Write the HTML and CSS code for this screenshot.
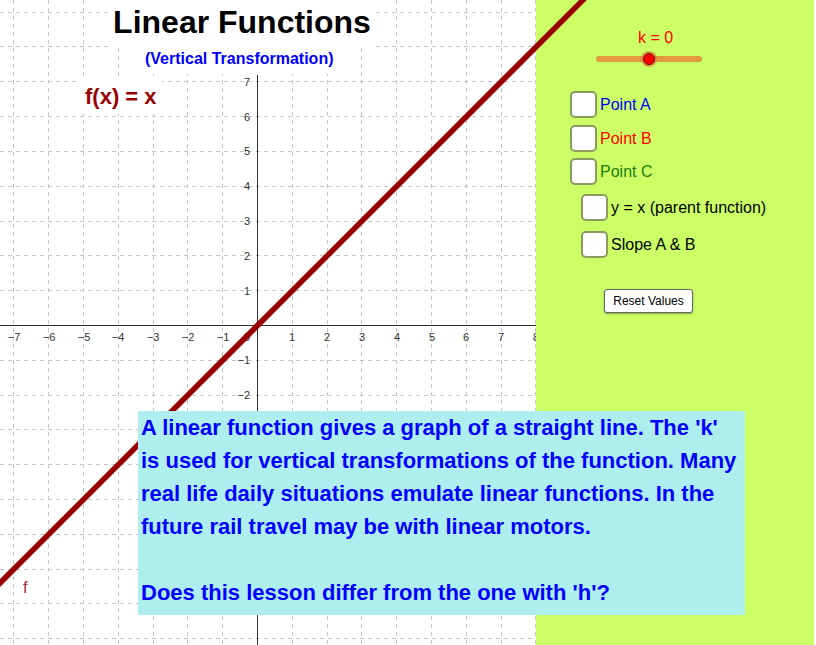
FILE: index.html
```html
<!DOCTYPE html>
<html lang="en">
<head>
  <meta charset="UTF-8" />
  <title>Linear Functions</title>
  <link rel="stylesheet" href="styles.css">
</head>
<body>
  <div class="applet">
    <!-- graphics view: grid, axes, panel background and f -->
    <svg class="graph" width="816" height="645" viewBox="0 0 816 645">
      <g class="grid">
        <line x1="13.5" y1="0" x2="13.5" y2="645"/>
        <line x1="48.5" y1="0" x2="48.5" y2="645"/>
        <line x1="83.5" y1="0" x2="83.5" y2="645"/>
        <line x1="118.5" y1="0" x2="118.5" y2="645"/>
        <line x1="153.5" y1="0" x2="153.5" y2="645"/>
        <line x1="187.5" y1="0" x2="187.5" y2="645"/>
        <line x1="222.5" y1="0" x2="222.5" y2="645"/>
        <line x1="292.5" y1="0" x2="292.5" y2="645"/>
        <line x1="327.5" y1="0" x2="327.5" y2="645"/>
        <line x1="361.5" y1="0" x2="361.5" y2="645"/>
        <line x1="396.5" y1="0" x2="396.5" y2="645"/>
        <line x1="431.5" y1="0" x2="431.5" y2="645"/>
        <line x1="466.5" y1="0" x2="466.5" y2="645"/>
        <line x1="501.5" y1="0" x2="501.5" y2="645"/>
        <line x1="535.5" y1="0" x2="535.5" y2="645"/>

        <line x1="0" y1="12.5" x2="536" y2="12.5"/>
        <line x1="0" y1="46.5" x2="536" y2="46.5"/>
        <line x1="0" y1="81.5" x2="536" y2="81.5"/>
        <line x1="0" y1="116.5" x2="536" y2="116.5"/>
        <line x1="0" y1="151.5" x2="536" y2="151.5"/>
        <line x1="0" y1="186.5" x2="536" y2="186.5"/>
        <line x1="0" y1="221.5" x2="536" y2="221.5"/>
        <line x1="0" y1="255.5" x2="536" y2="255.5"/>
        <line x1="0" y1="290.5" x2="536" y2="290.5"/>
        <line x1="0" y1="360.5" x2="536" y2="360.5"/>
        <line x1="0" y1="395.5" x2="536" y2="395.5"/>
        <line x1="0" y1="429.5" x2="536" y2="429.5"/>
        <line x1="0" y1="464.5" x2="536" y2="464.5"/>
        <line x1="0" y1="499.5" x2="536" y2="499.5"/>
        <line x1="0" y1="534.5" x2="536" y2="534.5"/>
        <line x1="0" y1="569.5" x2="536" y2="569.5"/>
        <line x1="0" y1="603.5" x2="536" y2="603.5"/>
        <line x1="0" y1="638.5" x2="536" y2="638.5"/>
      </g>

      <g class="axes">
        <line x1="0" y1="325.5" x2="536" y2="325.5"/>
        <line x1="257.5" y1="75" x2="257.5" y2="645"/>
      </g>

      <g class="ticks x-ticks">
        <text x="14" y="341">−7</text>
        <text x="49" y="341">−6</text>
        <text x="84" y="341">−5</text>
        <text x="118" y="341">−4</text>
        <text x="153" y="341">−3</text>
        <text x="188" y="341">−2</text>
        <text x="223" y="341">−1</text>
        <text x="292" y="341">1</text>
        <text x="327" y="341">2</text>
        <text x="362" y="341">3</text>
        <text x="397" y="341">4</text>
        <text x="432" y="341">5</text>
        <text x="466" y="341">6</text>
        <text x="501" y="341">7</text>
        <text x="536" y="341">8</text>
      </g>
      <g class="ticks y-ticks">
        <text x="250" y="341">0</text>
        <text x="250" y="86">7</text>
        <text x="250" y="121">6</text>
        <text x="250" y="155">5</text>
        <text x="250" y="190">4</text>
        <text x="250" y="225">3</text>
        <text x="250" y="260">2</text>
        <text x="250" y="295">1</text>
        <text x="250" y="364">−1</text>
        <text x="250" y="399">−2</text>
      </g>

      <rect class="panel-bg" x="536" y="0" width="278" height="645"/>

      <line class="fn" x1="-5" y1="588" x2="588" y2="-5"/>
      <text class="fn-label" x="23" y="593">f</text>
    </svg>

    <div class="overlay">
      <div class="heading">
        <h1 class="title">Linear Functions</h1>
        <p class="subtitle">(Vertical Transformation)</p>
        <p class="formula">f(x) = x</p>
      </div>

      <div class="panel">
        <div class="k-label">k = 0</div>
        <svg class="slider" width="112" height="20" viewBox="0 0 112 20">
          <line x1="6" y1="10" x2="106" y2="10" stroke="#e3993f" stroke-width="6" stroke-linecap="round"/>
          <circle cx="56" cy="10" r="8" fill="#e6783a" opacity="0.75"/>
          <circle cx="56" cy="10" r="5.5" fill="#ff0000" stroke="#5a1010" stroke-width="1"/>
        </svg>

        <div class="checks points">
          <label class="check"><span class="box"></span><span class="blue">Point A</span></label>
          <label class="check"><span class="box"></span><span class="red">Point B</span></label>
          <label class="check"><span class="box"></span><span class="green">Point C</span></label>
        </div>

        <div class="checks options">
          <label class="check"><span class="box"></span><span>y = x (parent function)</span></label>
          <label class="check"><span class="box"></span><span>Slope A &amp; B</span></label>
        </div>

        <button class="reset">Reset Values</button>
      </div>

      <p class="info">
        A linear function gives a graph of a straight line. The 'k'<br>
        is used for vertical transformations of the function. Many<br>
        real life daily situations emulate linear functions. In the<br>
        future rail travel may be with linear motors.<br>
        <br>
        Does this lesson differ from the one with 'h'?
      </p>
    </div>
  </div>
</body>
</html>
```

FILE: styles.css
```css
body {
  margin: 0;
  background-color: #fff;
  font-family: "Liberation Sans", Arial, sans-serif;
  overflow: hidden;
}

.applet {
  position: relative;
  width: 816px;
  height: 645px;
}

.graph {
  position: absolute;
  top: 0;
  left: 0;
}

.grid line {
  stroke: #c4c4c4;
  stroke-width: 1;
  stroke-dasharray: 4 4;
}

.axes line {
  stroke: #333;
  stroke-width: 1;
}

.ticks text {
  font-family: "Liberation Sans", Arial, sans-serif;
  font-size: 11px;
  fill: #333;
}

.x-ticks text {
  text-anchor: middle;
}

.y-ticks text {
  text-anchor: end;
}

.panel-bg {
  fill: #ccff66;
}

.fn {
  stroke: #990000;
  stroke-width: 5.5;
}

.fn-label {
  font-family: "Liberation Sans", Arial, sans-serif;
  font-size: 16px;
  fill: #993333;
}

.overlay {
  position: absolute;
  top: 0;
  left: 0;
  right: 0;
  bottom: 0;
  display: grid;
  grid-template-columns: 535px 1fr;
  grid-template-rows: 1fr auto;
}

.heading {
  grid-column: 1;
  grid-row: 1;
  display: flex;
  flex-direction: column;
  align-items: flex-start;
}

.title {
  margin: 0 0 0 108px;
  width: 268px;
  padding: 4px 0 7px;
  background-color: #fff;
  color: #000;
  font-size: 32px;
  line-height: 36px;
  font-weight: bold;
  text-align: center;
}

.subtitle {
  margin: 0 0 0 140px;
  padding: 2px 5px 5px;
  background-color: #fff;
  color: #0000ff;
  font-size: 16px;
  line-height: 20px;
  font-weight: bold;
}

.formula {
  margin: 6px 0 0 80px;
  padding: 4px 5px;
  background-color: #fff;
  color: #990000;
  font-size: 22px;
  line-height: 26px;
  font-weight: bold;
}

.panel {
  grid-column: 2;
  grid-row: 1;
  padding-top: 29px;
  display: flex;
  flex-direction: column;
  align-items: flex-start;
}

.k-label {
  margin-left: 103px;
  color: #ff0000;
  font-size: 16px;
  line-height: 18px;
}

.slider {
  display: block;
  margin: 2px 0 0 58px;
}

.checks {
  display: flex;
  flex-direction: column;
}

.points {
  margin: 22px 0 0 35px;
  gap: 6.5px;
}

.options {
  margin: 9px 0 0 46px;
  gap: 10px;
}

.check {
  display: flex;
  align-items: center;
  gap: 3px;
  font-size: 16px;
  line-height: 27px;
  color: #000;
}

.box {
  width: 27px;
  height: 27px;
  box-sizing: border-box;
  border: 2px solid #8c9b5c;
  border-radius: 5px;
  background-color: #fff;
}

.blue {
  color: #0000ff;
}

.red {
  color: #ff0000;
}

.green {
  color: #1e7d0a;
}

.reset {
  margin: 31px 0 0 69px;
  width: 89px;
  height: 24px;
  padding: 0;
  background-color: #fff;
  color: #000;
  border: 1px solid #666;
  border-radius: 3px;
  box-shadow: 0 1px 2px rgba(0, 0, 0, 0.35);
  font-family: "Liberation Sans", Arial, sans-serif;
  font-size: 12px;
}

.info {
  grid-column: 1 / span 2;
  grid-row: 2;
  margin: 0 0 30px 138px;
  width: 607px;
  box-sizing: border-box;
  padding: 0 0 6px 3px;
  background-color: #afeeee;
  color: #0000ff;
  font-size: 22px;
  line-height: 33px;
  font-weight: bold;
  white-space: nowrap;
}
```
